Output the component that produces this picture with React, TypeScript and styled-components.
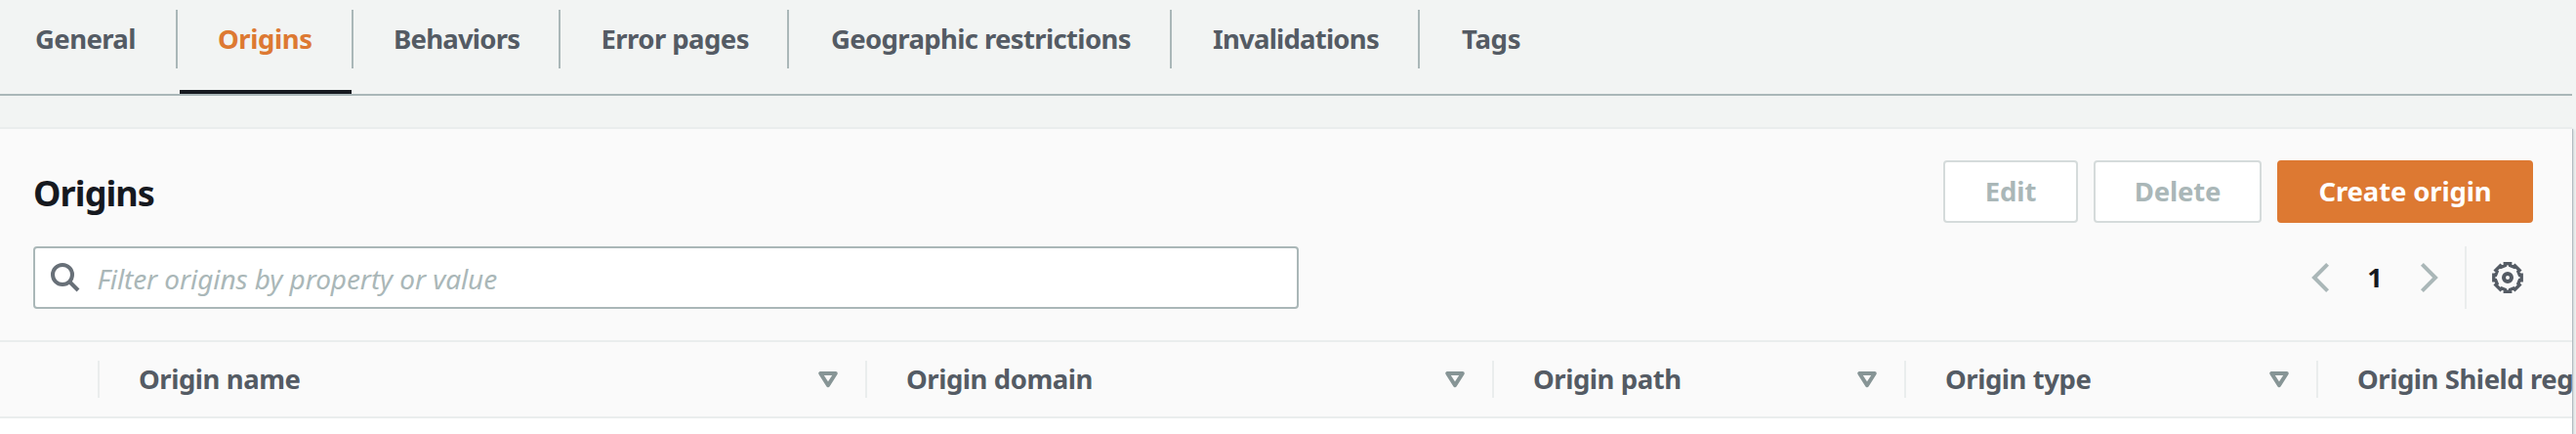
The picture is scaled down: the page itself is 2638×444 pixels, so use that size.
import React from "react";
import styled, { createGlobalStyle } from "styled-components";

const color = {
  page: "#f2f4f3",
  panel: "#fafafa",
  line: "#eaeded",
  border: "#aab7b8",
  disabledBorder: "#d5dbdb",
  text: "#545b64",
  heading: "#16191f",
  accent: "#dd7932",
  icon: "#687078",
  caret: "#879596",
};

const GlobalStyle = createGlobalStyle`
  *, *::before, *::after { box-sizing: border-box; }
  body {
    margin: 0;
    overflow: hidden;
    background: ${color.page};
    color: ${color.text};
    font-family: "Noto Sans", "Open Sans", sans-serif;
    font-size: 27.5px;
  }
`;

const Page = styled.div`
  display: flex;
  flex-direction: column;
  height: 444px;
  padding-right: 4px;
  overflow: hidden;
`;

const TabBar = styled.nav`
  display: flex;
  flex: none;
  height: 98px;
  padding-top: 10px;
  border-bottom: 2px solid ${color.border};
`;

const Tab = styled.div<{ $width: number; $active?: boolean }>`
  display: flex;
  flex-direction: column;
  justify-content: space-between;
  flex: none;
  width: ${(p) => p.$width}px;
  color: ${(p) => (p.$active ? color.accent : color.text)};
`;

const TabLabel = styled.div<{ $tracking: number; $indent: number; $last?: boolean }>`
  height: 60px;
  padding-left: ${(p) => p.$indent}px;
  border-right: ${(p) => (p.$last ? "none" : `2px solid ${color.border}`)};
  font-weight: 700;
  line-height: 60px;
  letter-spacing: ${(p) => p.$tracking}px;
  white-space: nowrap;
`;

const TabMarker = styled.div`
  height: 4px;
  margin: 0 2px;
  background: ${color.heading};
`;

const Panel = styled.section`
  display: flex;
  flex-direction: column;
  flex: 1;
  margin-top: 32px;
  border-top: 2px solid ${color.line};
  background: #fff;
  box-shadow: 1px 2px 1px 0 #b3bcc1, 3px 3px 2px 0 #dfe3e4;
`;

const PanelTop = styled.header`
  display: flex;
  flex-direction: column;
  flex: none;
  gap: 24px;
  height: 218px;
  padding: 32px 40px 0 34px;
  border-bottom: 2px solid ${color.line};
  background: ${color.panel};
`;

const Bar = styled.div`
  display: flex;
  align-items: center;
  justify-content: space-between;
  height: 64px;
`;

const Title = styled.h2`
  margin: 0;
  padding-top: 4px;
  color: ${color.heading};
  font-size: 36px;
  font-weight: 700;
  line-height: 60px;
  letter-spacing: -0.9px;
`;

const Actions = styled.div`
  display: flex;
  gap: 16px;
`;

const Button = styled.button<{ $width: number; $primary?: boolean }>`
  width: ${(p) => p.$width}px;
  height: 64px;
  padding: 0;
  border: 2px solid ${(p) => (p.$primary ? color.accent : color.disabledBorder)};
  border-radius: 4px;
  background: ${(p) => (p.$primary ? color.accent : "#fff")};
  color: ${(p) => (p.$primary ? "#fff" : color.border)};
  font: inherit;
  font-weight: 700;
  line-height: 60px;
  letter-spacing: -0.15px;
`;

const Search = styled.label`
  display: flex;
  align-items: center;
  gap: 17.5px;
  width: 1296px;
  height: 64px;
  padding-left: 16px;
  border: 2px solid ${color.border};
  border-radius: 4px;
  background: #fff;
`;

const SearchInput = styled.input`
  flex: 1;
  height: 60px;
  padding: 2px 0 0;
  border: 0;
  outline: 0;
  background: transparent;
  font: inherit;
  font-size: 28px;
  &::placeholder {
    color: ${color.border};
    font-style: italic;
    letter-spacing: -0.09px;
    opacity: 1;
  }
`;

const Tools = styled.div`
  display: flex;
  align-items: center;
  height: 64px;
`;

const Pager = styled.div`
  display: flex;
  align-items: center;
  justify-content: space-between;
  width: 130px;
  margin-right: 27px;
`;

const PageNumber = styled.span`
  color: ${color.heading};
  font-weight: 700;
  line-height: 60px;
`;

const Settings = styled.div`
  display: flex;
  align-items: center;
  height: 64px;
  padding: 0 10px 0 26px;
  border-left: 2px solid ${color.line};
`;

const HeaderRow = styled.div`
  display: flex;
  align-items: center;
  flex: none;
  height: 78px;
  border-bottom: 2px solid ${color.line};
  background: ${color.panel};
  overflow: hidden;
`;

const HeaderCell = styled.div<{ $width: number; $last?: boolean }>`
  display: flex;
  align-items: center;
  justify-content: space-between;
  flex: none;
  width: ${(p) => p.$width}px;
  height: 38px;
  padding: 0 28px 0 40px;
  border-right: ${(p) => (p.$last ? "none" : `2px solid ${color.line}`)};
  font-weight: 700;
  line-height: 38px;
  letter-spacing: -0.45px;
  white-space: nowrap;
`;

const Icon = styled.svg`
  display: block;
  flex: none;
  overflow: visible;
`;

const SearchIcon = () => (
  <Icon width="30" height="30" viewBox="0 0 30 30" fill="none" stroke={color.icon} strokeWidth="4">
    <circle cx="12" cy="12" r="10" />
    <path d="M19 19l9 9" />
  </Icon>
);

const Chevron = ({ right }: { right?: boolean }) => (
  <Icon width="18" height="30" viewBox="0 0 18 30" fill="none" stroke={color.border} strokeWidth="4">
    <path d={right ? "M1.4 1.4L15 15L1.4 28.6" : "M16.6 1.4L3 15L16.6 28.6"} />
  </Icon>
);

const Caret = () => (
  <Icon width="20" height="16" viewBox="0 0 20 16" fill="none" stroke={color.caret} strokeWidth="4" strokeLinejoin="round">
    <path d="M2.2 2H17.8L10 14.2z" />
  </Icon>
);

const Gear = () => (
  <Icon width="32" height="32" viewBox="0 0 32 32" fill="none" stroke={color.text}>
    <path
      strokeWidth="3.4"
      d="M13.3 1.8h5.4v1.9l3.4 1.4 1.4-1.3 4.7 4.7-1.3 1.4 1.4 3.4h1.9v5.4h-1.9l-1.4 3.4 1.3 1.4-4.7 4.7-1.4-1.3-3.4 1.4v1.9h-5.4v-1.9l-3.4-1.4-1.4 1.3-4.7-4.7 1.3-1.4-1.4-3.4H1.8v-5.4h1.9l1.4-3.4-1.3-1.4 4.7-4.7 1.4 1.3 3.4-1.4z"
    />
    <circle cx="16" cy="16" r="4" strokeWidth="4" />
  </Icon>
);

const tabs = [
  { label: "General", width: 182, indent: 36, tracking: -0.6 },
  { label: "Origins", width: 180, indent: 41, tracking: -0.42, active: true },
  { label: "Behaviors", width: 212, indent: 41, tracking: -0.78 },
  { label: "Error pages", width: 234, indent: 41.5, tracking: -0.55 },
  { label: "Geographic restrictions", width: 392, indent: 43, tracking: -0.64 },
  { label: "Invalidations", width: 254, indent: 42, tracking: -0.78 },
  { label: "Tags", width: 140, indent: 43, tracking: -0.27 },
];

const columns = [
  { label: "", width: 102 },
  { label: "Origin name", width: 786 },
  { label: "Origin domain", width: 642 },
  { label: "Origin path", width: 422 },
  { label: "Origin type", width: 422 },
  { label: "Origin Shield region", width: 422 },
];

export default function App() {
  return (
    <>
      <GlobalStyle />
      <Page>
        <TabBar>
          {tabs.map((t, i) => (
            <Tab key={t.label} $width={t.width} $active={t.active}>
              <TabLabel $tracking={t.tracking} $indent={t.indent} $last={i === tabs.length - 1}>
                {t.label}
              </TabLabel>
              {t.active && <TabMarker />}
            </Tab>
          ))}
        </TabBar>
        <Panel>
          <PanelTop>
            <Bar>
              <Title>Origins</Title>
              <Actions>
                <Button $width={138}>Edit</Button>
                <Button $width={172}>Delete</Button>
                <Button $width={262} $primary>
                  Create origin
                </Button>
              </Actions>
            </Bar>
            <Bar>
              <Search>
                <SearchIcon />
                <SearchInput placeholder="Filter origins by property or value" />
              </Search>
              <Tools>
                <Pager>
                  <Chevron />
                  <PageNumber>1</PageNumber>
                  <Chevron right />
                </Pager>
                <Settings>
                  <Gear />
                </Settings>
              </Tools>
            </Bar>
          </PanelTop>
          <HeaderRow>
            {columns.map((c, i) => (
              <HeaderCell key={i} $width={c.width} $last={i === columns.length - 1}>
                {c.label}
                {i > 0 && i < columns.length - 1 && <Caret />}
              </HeaderCell>
            ))}
          </HeaderRow>
        </Panel>
      </Page>
    </>
  );
}
